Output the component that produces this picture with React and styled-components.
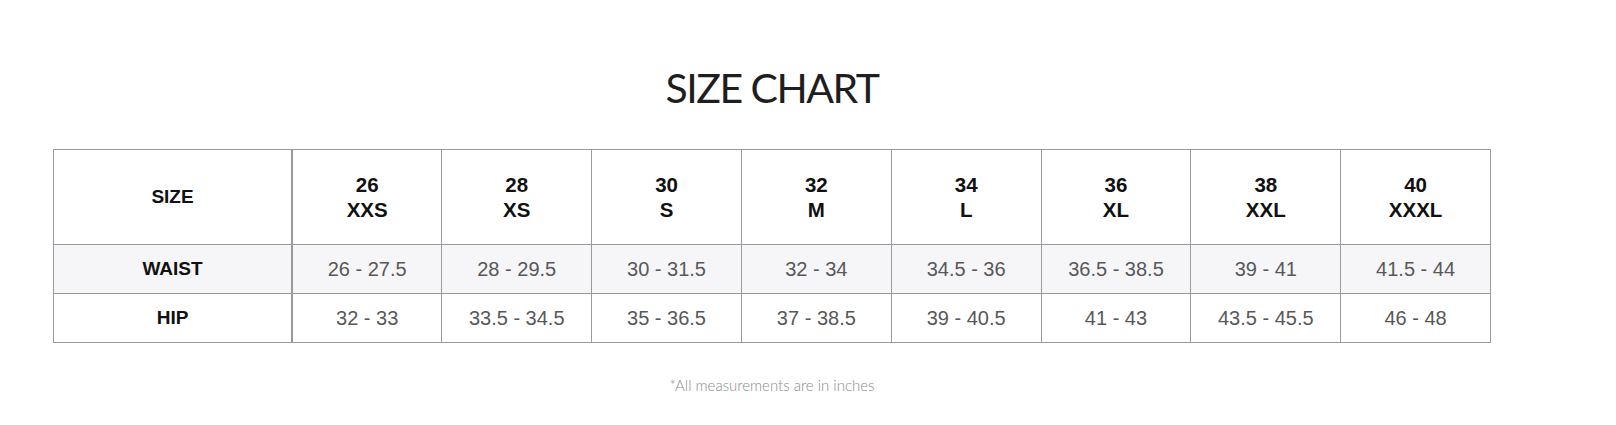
import React from "react";
import styled, { createGlobalStyle } from "styled-components";

const Global = createGlobalStyle`
  html, body { margin: 0; padding: 0; background: #fff; }
  body { font-family: "Liberation Sans", Arial, sans-serif; }
`;

const Page = styled.div`
  width: 1438px;
  margin-left: 53px;
  padding-top: 62px;
  display: flex;
  flex-direction: column;
  align-items: center;
`;

const Title = styled.h1`
  margin: 0;
  font-family: Lato, "Noto Sans", sans-serif;
  font-weight: 400;
  font-size: 41px;
  line-height: 52px;
  letter-spacing: -1.5px;
  color: #1e1e1e;
`;

const Table = styled.table`
  margin-top: 35px;
  width: 1438px;
  border-collapse: collapse;
  table-layout: fixed;
`;

const Row = styled.tr`
  background: ${(p) => (p.$shade ? "#f6f6f8" : "#fff")};
`;

const Cell = styled.td`
  border: 1px solid #9a9a9a;
  border-left-width: ${(p) => (p.$afterLabel ? "2px" : "1px")};
  height: ${(p) => (p.$tall ? "94px" : "48px")};
  padding: 0;
  text-align: center;
  vertical-align: middle;
  width: ${(p) => (p.$label ? "237px" : "auto")};
`;

const Label = styled.span`
  font-family: "Liberation Sans", Arial, sans-serif;
  font-weight: 700;
  font-size: 19px;
  color: #111;
`;

const HeadSize = styled.div`
  font-family: "Liberation Sans", Arial, sans-serif;
  font-weight: 700;
  font-size: 20.5px;
  line-height: 25px;
  color: #111;
`;

const Value = styled.span`
  font-family: "Liberation Sans", Arial, sans-serif;
  font-size: 20px;
  color: #585858;
`;

const Note = styled.p`
  margin: 33px 0 0;
  font-family: Lato, "Noto Sans", sans-serif;
  font-weight: 300;
  font-size: 15px;
  color: #8a8a8a;
`;

const sizes = [
  ["26", "XXS"],
  ["28", "XS"],
  ["30", "S"],
  ["32", "M"],
  ["34", "L"],
  ["36", "XL"],
  ["38", "XXL"],
  ["40", "XXXL"],
];

const waist = ["26 - 27.5", "28 - 29.5", "30 - 31.5", "32 - 34", "34.5 - 36", "36.5 - 38.5", "39 - 41", "41.5 - 44"];
const hip = ["32 - 33", "33.5 - 34.5", "35 - 36.5", "37 - 38.5", "39 - 40.5", "41 - 43", "43.5 - 45.5", "46 - 48"];

export default function App() {
  return (
    <>
      <Global />
      <Page>
        <Title>SIZE CHART</Title>
        <Table>
          <tbody>
            <Row>
              <Cell $tall $label>
                <Label>SIZE</Label>
              </Cell>
              {sizes.map(([n, s], i) => (
                <Cell key={n} $tall $afterLabel={i === 0}>
                  <HeadSize>{n}</HeadSize>
                  <HeadSize>{s}</HeadSize>
                </Cell>
              ))}
            </Row>
            <Row $shade>
              <Cell $label>
                <Label>WAIST</Label>
              </Cell>
              {waist.map((v, i) => (
                <Cell key={i} $afterLabel={i === 0}>
                  <Value>{v}</Value>
                </Cell>
              ))}
            </Row>
            <Row>
              <Cell $label>
                <Label>HIP</Label>
              </Cell>
              {hip.map((v, i) => (
                <Cell key={i} $afterLabel={i === 0}>
                  <Value>{v}</Value>
                </Cell>
              ))}
            </Row>
          </tbody>
        </Table>
        <Note>*All measurements are in inches</Note>
      </Page>
    </>
  );
}
